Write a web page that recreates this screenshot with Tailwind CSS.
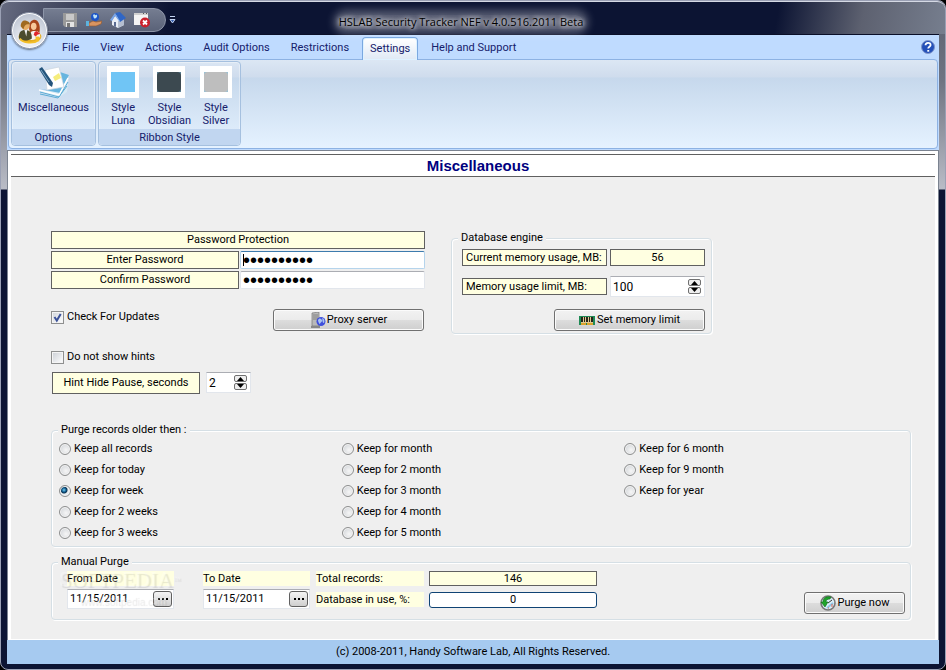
<!DOCTYPE html>
<html lang="en">
<head>
  <meta charset="UTF-8" />
  <meta name="viewport" content="width=device-width, initial-scale=1.0"/>
  <title>HSLAB Security Tracker NEF</title>
  <script src="https://cdn.jsdelivr.net/npm/@tailwindcss/browser@4"></script>
</head>
<body class="bg-black font-['Roboto','Liberation_Sans',sans-serif] text-[11px] leading-[14px] text-black">

  <!-- Window frame -->
  <div class="relative min-h-screen flex flex-col px-[6px] pb-[5px] border border-[#9aa0b4] rounded-lg bg-[linear-gradient(180deg,#5a6070_0px,#6f7482_80px,#b9bcc6_188px,#0c1433_189px,#0c1433_100%)]">

    <!-- Title bar -->
    <header class="-mx-[6px] h-[33px] relative flex items-center justify-center rounded-t-lg border-t border-[#d5d9e4] bg-[linear-gradient(100deg,#666b80_0%,#4a4f66_5%,#0c1433_18%,#0c1433_82%,#5d6170_91%,#767e8e_100%)]">
      <h1 class="font-['Open_Sans',sans-serif] text-[11px] leading-[14px] mt-2 ml-[-24px] rounded-full bg-white/30 shadow-[0_0_8px_5px_rgba(255,255,255,0.3)] [text-shadow:0_0_4px_#fff,0_0_6px_#fff]">HSLAB Security Tracker NEF v 4.0.516.2011 Beta</h1>

      <!-- Quick access -->
      <div class="absolute left-[42px] top-[6px] h-6 w-[123px] pl-[18px] flex items-center gap-2 rounded-r-full border border-[#8d95a8] bg-gradient-to-b from-[#757d91] to-[#5a6278]">
        <button aria-label="Save"><svg class="size-4" viewBox="0 0 16 16"><path d="M1 1h14v14H3l-2-2z" fill="#9a9a9a"/><path d="M4 2h8v6H4z" fill="#c9c9c9"/><path d="M4 10h8v5H4z" fill="#e4e4e4"/><path d="M5 11h3v4H5z" fill="#777"/></svg></button>
        <button aria-label="Share"><svg class="size-4" viewBox="0 0 16 16"><circle cx="9" cy="5" r="4" fill="#1c55c8"/><path d="M7 3c2-2 2 1 3 0s2 2 0 3-2 1-3-3" fill="#bfe3f7"/><path d="M3 11l4-2 3 1 6-1-1 3-5 2H3z" fill="#d99561" stroke="#93552c" stroke-width=".6"/><path d="M0 9h3v5H0z" fill="#5db2dd"/></svg></button>
        <button aria-label="Home"><svg class="size-4" viewBox="0 0 16 16"><path d="M2 8l4-5 8 5v5l-6 3-6-3z" fill="#e9eef6"/><path d="M8 16V9l6-2v6z" fill="#b4bed0"/><path d="M5 1l5-1 6 6-6 4z" fill="#2f66c6"/><path d="M5 1L0 8l2 1 3-5 4 5 1 0z" fill="#79a5e8"/><path d="M4 10h2v5l-2-1z" fill="#5a6b92"/></svg></button>
        <button aria-label="Close window"><svg class="size-4" viewBox="0 0 16 16"><path d="M0 1h14v12H0z" fill="#f4f4f4"/><path d="M0 1h14v2H0z" fill="#d0d0d0"/><path d="M9 1h1v1H9zM12 1h1v1h-1z" fill="#555"/><circle cx="11" cy="10.500" r="5" fill="#c9202c"/><path d="M9 8.500l4 4m0-4l-4 4" stroke="#fff" stroke-width="1.800"/></svg></button>
      </div>
      <button class="absolute left-[168px] top-[14px]" aria-label="Customize toolbar"><svg class="w-[7px] h-[8px]" viewBox="0 0 7 8"><path d="M1 .5h5M1 3.500h5L3.500 7z" fill="#3c63b0" stroke="#c4d4f2"/></svg></button>
    </header>

    <!-- Application button -->
    <button aria-label="Application menu" class="absolute left-[10px] top-[11px] size-[37px] rounded-full border border-[#8b93a6] bg-[radial-gradient(circle_at_50%_75%,#ffffff,#cdd3de_60%,#aab2c2)] shadow-[inset_0_0_0_1px_#fff,0_1px_2px_rgba(0,0,0,0.5)] flex items-center justify-center">
      <svg class="size-[26px]" viewBox="0 0 28 28">
        <ellipse cx="14" cy="20" rx="11" ry="5" fill="none" stroke="#e5ad20" stroke-width="2.500"/>
        <path d="M13 12c0-8 3-10 6-10s7 4 5 15h-9z" fill="#a8451b"/>
        <ellipse cx="18" cy="9" rx="3" ry="4" fill="#f8c79a"/>
        <path d="M14 21c0-6 1-7 5-7s6 2 6 7z" fill="#f4f0ee"/>
        <path d="M19 15l2-1 4 3-3 1-2 2-2-2z" fill="#e0262b"/>
        <circle cx="9" cy="8.500" r="4.500" fill="#e7ad64"/>
        <path d="M4 9c0-5 3-7 6-6s4 2 4 4c-4-1-6 0-7 5z" fill="#a06a20"/>
        <path d="M2 22c0-7 2-9 7-9 4 0 7 2 7 9-4 3-10 3-14 0z" fill="#4b4b2d"/>
        <path d="M8 13h3l-1 7z" fill="#eee"/>
        <path d="M20 20h4v5h-4z" fill="#f2be29"/>
        <path d="M3 22c3 5 15 6 20 2" fill="none" stroke="#f2be29" stroke-width="2"/>
      </svg>
    </button>

    <!-- Client area -->
    <div class="flex-1 flex flex-col bg-[#bfdbff] border-t border-[#0a0f28]">

      <!-- Menu tabs -->
      <nav class="flex items-end h-6 pl-[47px] pr-[4px] text-[#15206b]">
        <div class="flex flex-1 items-end gap-[5px]">
          <button class="h-[23px] px-2">File</button>
          <button class="h-[23px] px-2">View</button>
          <button class="h-[23px] px-2">Actions</button>
          <button class="h-[23px] px-2">Audit Options</button>
          <button class="h-[23px] px-2">Restrictions</button>
          <button class="h-[23px] px-[7px] -mb-px relative border border-b-0 border-[#7ba8e0] rounded-t bg-gradient-to-b from-white to-[#dfe9f5] shadow-[inset_0_0_0_1px_#dff2ff]">Settings</button>
          <button class="h-[23px] px-2">Help and Support</button>
        </div>
        <button aria-label="Help" class="mb-[5px]"><svg class="size-[14px]" viewBox="0 0 14 14"><circle cx="7" cy="7" r="6.500" fill="#2450b8" stroke="#8195c8"/><path d="M4.500 5.300C4.500 2 9.600 2 9.600 5c0 1.800-2.400 1.800-2.400 3.600" fill="none" stroke="#fff" stroke-width="1.800"/><path d="M6.300 10h1.900v1.700H6.300z" fill="#fff"/></svg></button>
      </nav>

      <!-- Ribbon -->
      <div class="mx-px flex gap-[2px] h-[90px] p-[2px] pt-px rounded border border-[#8db2e3] bg-[linear-gradient(180deg,#dce7f4_0px,#cfdced_17px,#c6d8ec_18px,#e5f2ff_100%)] text-[#15206b] text-center">
        <section class="w-[85px] flex flex-col rounded border border-[#a5c0df] shadow-[inset_0_0_0_1px_rgba(255,255,255,0.35)]">
          <button class="flex-1 flex flex-col items-center gap-[2px] pt-1">
            <svg class="w-8 h-[33px]" viewBox="0 0 32 33">
              <path d="M3 26l18-3 10-15-2 18-9 6z" fill="#d7eaf5"/>
              <path d="M2 23l20 4L31 9l-9-3-13 18z" fill="#66b5df"/>
              <path d="M2 26l19 5 9-15M2 28l18 4 9-12" fill="none" stroke="#5bacd5"/>
              <path d="M1 24l20 5 9-17" fill="none" stroke="#fff" stroke-width="1.500"/>
              <path d="M7 4l14-3 5 20-17 3z" fill="#fff" stroke="#c8d2de" stroke-width=".7"/>
              <path d="M15 11l6-4 2 5-6 3z" fill="#f6ed7c"/>
              <path d="M1 3l3-2 11 16-1 4-3-2z" fill="#24547c"/>
              <path d="M3 4l8 12" stroke="#7fa8c6"/>
            </svg>
            <span>Miscellaneous</span>
          </button>
          <h2 class="h-4 leading-[18px] bg-[#c1d6f0] rounded-b">Options</h2>
        </section>
        <section class="w-[143px] flex flex-col rounded border border-[#a5c0df] shadow-[inset_0_0_0_1px_rgba(255,255,255,0.35)]">
          <div class="flex-1 grid grid-cols-3 px-px pt-1 leading-[13px]">
            <button class="flex flex-col items-center gap-[3px]"><span class="w-8 h-8 bg-white px-1 py-[6px]"><span class="block h-5 bg-[#70c5f5]"></span></span><span>Style<br>Luna</span></button>
            <button class="flex flex-col items-center gap-[3px]"><span class="w-8 h-8 bg-white px-1 py-[6px]"><span class="block h-5 bg-[#5b8195]"><span class="block h-5 rounded bg-[#3c4950]"></span></span></span><span>Style<br>Obsidian</span></button>
            <button class="flex flex-col items-center gap-[3px]"><span class="w-8 h-8 bg-white px-1 py-[6px]"><span class="block h-5 bg-[#9cc0d2]"><span class="block h-5 rounded bg-[#bebebe]"></span></span></span><span>Style<br>Silver</span></button>
          </div>
          <h2 class="h-4 leading-[18px] bg-[#c1d6f0] rounded-b">Ribbon Style</h2>
        </section>
      </div>

      <!-- Page -->
      <main class="flex-1 flex flex-col mt-px bg-white border-t border-x border-[#7b8390] px-[3px] pt-[3px]">
        <h2 class="h-[23px] leading-[22px] pl-[10px] border-y border-[#606060] text-center text-[15px] font-bold text-[#000080] font-['Liberation_Sans',sans-serif]">Miscellaneous</h2>

        <div class="flex-1 bg-[#efefef] border-b border-white pt-[54px] pl-10 pr-[24px] pb-[19px]">
          <div class="flex gap-[26px]">

            <!-- Password -->
            <div class="w-[374px]">
              <div class="grid grid-cols-[188px_1fr] gap-x-px gap-y-[2px] text-center">
                <h3 class="col-span-2 h-[18px] leading-4 border border-[#606060] bg-[#ffffe1]">Password Protection</h3>
                <label for="pw" class="h-[18px] leading-4 border border-[#606060] bg-[#ffffe1]">Enter Password</label>
                <div class="relative h-[18px]">
                  <input id="pw" type="password" value="0123456789" class="block w-full h-[18px] px-[2px] text-[20px] leading-4 font-['Liberation_Sans',sans-serif] bg-white border border-[#b5d4ec] border-t-[#3d7bad] rounded-xs outline-none">
                  <span class="absolute left-[3px] top-[3px] w-px h-3 bg-black"></span>
                </div>
                <label for="pw2" class="h-[18px] leading-4 border border-[#606060] bg-[#ffffe1]">Confirm Password</label>
                <input id="pw2" type="password" value="0123456789" class="block w-full h-[18px] px-[2px] text-[20px] leading-4 font-['Liberation_Sans',sans-serif] bg-white border border-[#e2e6ec] border-t-[#abadb3] rounded-xs outline-none">
              </div>

              <div class="flex justify-between items-start mt-5 pr-px">
                <label class="flex items-center gap-[3px] h-4"><span class="relative size-[13px]"><input type="checkbox" checked class="peer block appearance-none size-[13px] border border-[#8e8f8f] bg-gradient-to-br from-[#d0d4da] to-white shadow-[inset_0_0_0_1px_#f4f4f4]"><svg class="absolute left-0 top-0 size-[13px] hidden peer-checked:block pointer-events-none" viewBox="0 0 13 13"><path d="M3.500 6l2.300 3.500L9.700 3" fill="none" stroke="#3c5299" stroke-width="2"/></svg></span>Check For Updates</label>
                <button class="flex items-center justify-center gap-px w-[151px] h-[22px] rounded-[3px] border border-[#707070] bg-[linear-gradient(180deg,#f2f2f2_0%,#ebebeb_50%,#dddddd_50%,#cfcfcf_100%)] shadow-[inset_0_0_0_1px_#fbfbfb]">
                  <svg class="size-4" viewBox="0 0 16 16"><path d="M2 1l7-1v14H2z" fill="#b9b9b9" stroke="#777" stroke-width=".7"/><path d="M3 3h5M3 5h5M3 7h5" stroke="#777" stroke-width=".8"/><path d="M1 14h9v2H1z" fill="#888"/><circle cx="11" cy="9.500" r="4.500" fill="#3f4fdc"/><path d="M8 8c2-3 3-1 4 0s-2 3-2 4-2-2-2-4M12 6c2 0 3 3 2 5-2 0-1-3-2-5" fill="#a9c4ef"/></svg>
                  Proxy server
                </button>
              </div>
              <label class="flex items-center gap-[3px] mt-[18px] h-4"><input type="checkbox" class="appearance-none size-[13px] border border-[#8e8f8f] bg-gradient-to-br from-[#cbcfd5] to-white shadow-[inset_0_0_0_1px_#f4f4f4]">Do not show hints</label>
              <div class="flex gap-[6px] mt-[7px] ml-px">
                <label for="pause" class="w-[148px] h-[22px] leading-5 border border-[#606060] bg-[#ffffe1] text-center">Hint Hide Pause, seconds</label>
                <div class="flex w-[45px] h-[21px] pl-[2px] pr-[3px] bg-white border border-[#e2e6ec] border-t-[#abadb3]">
                  <input id="pause" type="text" value="2" class="flex-1 min-w-0 text-[12px] outline-none">
                  <div class="flex flex-col justify-center gap-px">
                    <button aria-label="Increase pause" class="w-[13px] h-[7px] border border-[#707070] rounded-xs bg-[#eee]"><svg class="block w-full h-[5px]" viewBox="0 0 11 5"><path d="M2 5l3.500-4L9 5z"/></svg></button>
                    <button aria-label="Decrease pause" class="w-[13px] h-[7px] border border-[#707070] rounded-xs bg-[#eee]"><svg class="block w-full h-[5px]" viewBox="0 0 11 5"><path d="M2 0l3.500 4L9 0z"/></svg></button>
                  </div>
                </div>
              </div>
            </div>

            <!-- Database engine -->
            <fieldset class="w-[260px] h-[103px] px-[6px] pl-[10px] border border-[#d5dfe5] rounded shadow-[inset_1px_1px_0_#fff,1px_1px_0_#fff]">
              <legend class="px-[3px] -ml-[4px] bg-[#efefef]">Database engine</legend>
              <div class="grid grid-cols-[145px_95px] gap-x-[3px] mt-[4px]">
                <span class="h-[17px] leading-[15px] pl-[3px] border border-[#606060] bg-[#ffffe1]">Current memory usage, MB:</span>
                <output class="h-[17px] leading-[15px] border border-[#606060] bg-[#ffffe1] text-center">56</output>
              </div>
              <div class="grid grid-cols-[145px_95px] items-center gap-x-[3px] mt-[10px]">
                <label for="limit" class="h-[17px] leading-[15px] pl-[3px] border border-[#606060] bg-[#ffffe1]">Memory usage limit, MB:</label>
                <div class="flex h-[21px] pl-[2px] pr-[3px] bg-white border border-[#e2e6ec] border-t-[#abadb3]">
                  <input id="limit" type="text" value="100" class="flex-1 min-w-0 text-[12px] outline-none">
                  <div class="flex flex-col justify-center gap-px">
                    <button aria-label="Increase limit" class="w-[13px] h-[7px] border border-[#707070] rounded-xs bg-[#eee]"><svg class="block w-full h-[5px]" viewBox="0 0 11 5"><path d="M2 5l3.500-4L9 5z"/></svg></button>
                    <button aria-label="Decrease limit" class="w-[13px] h-[7px] border border-[#707070] rounded-xs bg-[#eee]"><svg class="block w-full h-[5px]" viewBox="0 0 11 5"><path d="M2 0l3.500 4L9 0z"/></svg></button>
                  </div>
                </div>
              </div>
              <button class="flex items-center justify-center gap-[2px] w-[151px] h-[22px] mt-3 ml-auto rounded-[3px] border border-[#707070] bg-[linear-gradient(180deg,#f2f2f2_0%,#ebebeb_50%,#dddddd_50%,#cfcfcf_100%)] shadow-[inset_0_0_0_1px_#fbfbfb]">
                <svg class="w-4 h-[9px]" viewBox="0 0 16 9"><path d="M0 0h16v9H0z" fill="#1f8a55"/><path d="M2 1h12v6H2z" fill="#e0c890"/><path d="M2 1h2v5H2zM5 1h1v5H5zM7 1h2v5H7zM10 1h1v5h-1zM12 1h2v5h-2z" fill="#26251a"/><path d="M2 7h5v2H2zM8 7h6v2H8z" fill="#dda52c"/></svg>
                Set memory limit
              </button>
            </fieldset>
          </div>

          <!-- Purge records -->
          <fieldset class="mt-[29px] h-[124px] pl-[7px] pr-[3px] border border-[#d5dfe5] rounded shadow-[inset_1px_1px_0_#fff,1px_1px_0_#fff]">
            <legend class="px-[3px] -ml-px bg-[#efefef]">Purge records older then :</legend>
            <div class="grid grid-cols-3 grid-rows-5 grid-flow-col mt-px [&>label]:flex [&>label]:h-[21px] [&>label]:items-center [&>label]:gap-[3px] [&_input]:appearance-none [&_input]:size-3 [&_input]:rounded-full [&_input]:border [&_input]:border-[#8e8f8f] [&_input]:bg-[radial-gradient(circle_at_60%_60%,#f6f6f6,#c9cdd2)] [&_input]:shadow-[inset_0_0_0_1px_#f4f4f4] [&_input:checked]:bg-[radial-gradient(circle_at_40%_40%,#7fd0ee_0px,#0f5f94_2px,#0d3350_3px,#e8edf0_4px)]">
              <label><input type="radio" name="keep">Keep all records</label>
              <label><input type="radio" name="keep">Keep for today</label>
              <label><input type="radio" name="keep" checked>Keep for week</label>
              <label><input type="radio" name="keep">Keep for 2 weeks</label>
              <label><input type="radio" name="keep">Keep for 3 weeks</label>
              <label><input type="radio" name="keep">Keep for month</label>
              <label><input type="radio" name="keep">Keep for 2 month</label>
              <label><input type="radio" name="keep">Keep for 3 month</label>
              <label><input type="radio" name="keep">Keep for 4 month</label>
              <label><input type="radio" name="keep">Keep for 5 month</label>
              <label><input type="radio" name="keep">Keep for 6 month</label>
              <label><input type="radio" name="keep">Keep for 9 month</label>
              <label><input type="radio" name="keep">Keep for year</label>
            </div>
          </fieldset>

          <!-- Manual purge -->
          <fieldset class="relative mt-2 h-[65px] pl-[15px] pr-[5px] border border-[#d5dfe5] rounded shadow-[inset_1px_1px_0_#fff,1px_1px_0_#fff]">
            <legend class="px-[3px] -ml-[9px] bg-[#efefef]">Manual Purge</legend>
            <div class="flex mt-[2px]">
              <div class="w-[107px]">
                <label for="from" class="block h-[15px] leading-[15px] bg-[#ffffe1]">From Date</label>
                <div class="flex h-5 mt-[3px] p-px bg-white border border-[#e2e6ec] border-t-[#abadb3]">
                  <input id="from" type="text" value="11/15/2011" class="flex-1 min-w-0 pl-px outline-none">
                  <button aria-label="Pick from date" class="flex items-center justify-center gap-[2px] w-[19px] h-4 rounded-[3px] border border-[#606060] bg-gradient-to-b from-[#f4f4f4] to-[#cfcfcf]"><i class="size-[2px] bg-black"></i><i class="size-[2px] bg-black"></i><i class="size-[2px] bg-black"></i></button>
                </div>
              </div>
              <div class="w-[107px] ml-[29px]">
                <label for="to" class="block h-[15px] leading-[15px] bg-[#ffffe1]">To Date</label>
                <div class="flex h-5 mt-[3px] p-px bg-white border border-[#e2e6ec] border-t-[#abadb3]">
                  <input id="to" type="text" value="11/15/2011" class="flex-1 min-w-0 pl-px outline-none">
                  <button aria-label="Pick to date" class="flex items-center justify-center gap-[2px] w-[19px] h-4 rounded-[3px] border border-[#606060] bg-gradient-to-b from-[#f4f4f4] to-[#cfcfcf]"><i class="size-[2px] bg-black"></i><i class="size-[2px] bg-black"></i><i class="size-[2px] bg-black"></i></button>
                </div>
              </div>
              <div class="grid grid-cols-[108px_168px] gap-x-[5px] gap-y-[6px] content-start ml-[6px]">
                <span class="h-[15px] leading-[15px] bg-[#ffffe1]">Total records:</span>
                <output class="h-[15px] leading-[14px] border border-[#606060] bg-[#ffffe1] text-center">146</output>
                <span class="h-[15px] leading-[15px] bg-[#ffffe1]">Database in use, %:</span>
                <output class="h-4 leading-[14px] border border-[#0f4374] rounded-[3px] bg-white text-center">0</output>
              </div>
              <button class="flex items-center justify-center gap-[2px] w-[101px] h-[22px] mt-[21px] ml-auto rounded-[3px] border border-[#707070] bg-[linear-gradient(180deg,#f2f2f2_0%,#ebebeb_50%,#dddddd_50%,#cfcfcf_100%)] shadow-[inset_0_0_0_1px_#fbfbfb]">
                <svg class="size-4" viewBox="0 0 16 16"><circle cx="8" cy="8" r="7" fill="#d9eef7" stroke="#777" stroke-width="1.600"/><path d="M8 8l4-3" stroke="#333"/><path d="M7 13l6-5" stroke="#8fc4e4" stroke-width="2"/><path d="M12 9v3M8 13h1" stroke="#e2604c"/><path d="M11 2C6 1 3 3 3 7H1l4 5 3-5H6c0-2 1-3 4-3z" fill="#1fa32b" stroke="#0d6b17" stroke-width=".6"/></svg>
                Purge now
              </button>
            </div>
            <!-- Watermark -->
            <div aria-hidden="true" class="absolute left-[8px] top-[-1px] pointer-events-none text-white/10 font-['Liberation_Serif',serif] [text-shadow:1px_1px_1px_rgba(0,0,0,0.1),-1px_-1px_0_rgba(255,255,255,0.3)]">
              <div class="text-[21px] leading-6">SOFTPEDIA<sup class="text-[8px]">™</sup></div>
              <div class="pl-[20px] text-[10px] leading-[20px] font-['Liberation_Sans',sans-serif]">www.softpedia.com</div>
            </div>
          </fieldset>
        </div>
      </main>

      <footer class="h-6 leading-6 bg-[#a6caf0] text-center">(c) 2008-2011, Handy Software Lab, All Rights Reserved.</footer>
    </div>
  </div>
</body>
</html>
